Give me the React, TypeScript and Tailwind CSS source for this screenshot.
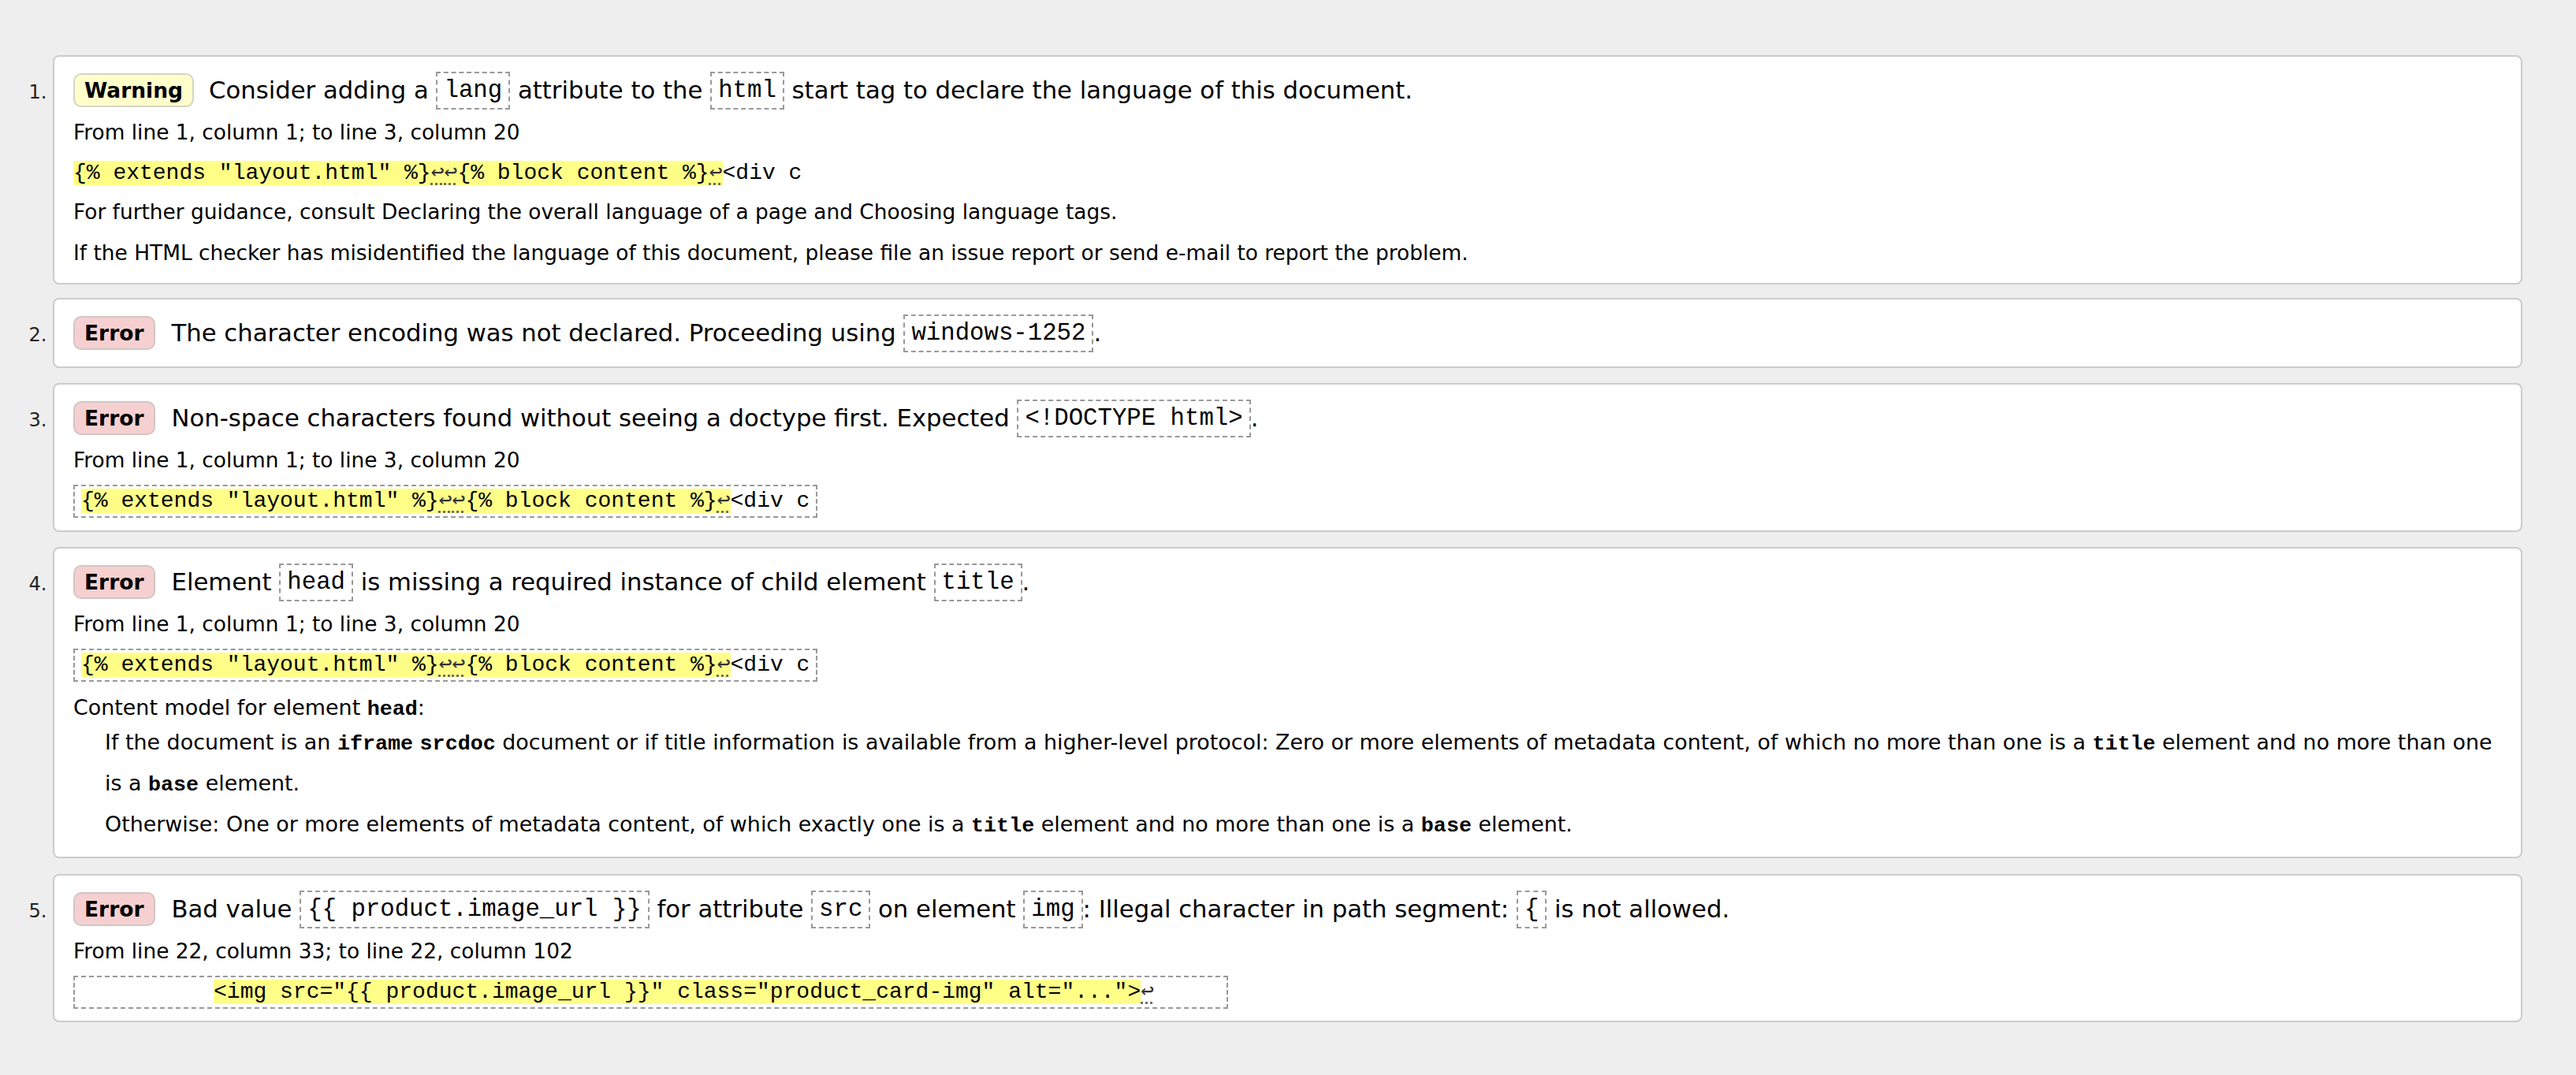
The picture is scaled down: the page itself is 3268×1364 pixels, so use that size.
import React from "react";

type Kids = { children?: React.ReactNode };

const Badge = ({ kind }: { kind: "Warning" | "Error" }) =>
  kind === "Warning" ? (
    <strong className="inline-block align-top mt-[2px] mr-[19px] px-[12px] leading-[39px] text-[26.5px] font-bold text-black bg-[#ffffcc] border-2 border-[#d4d4c4] rounded-[10px]">
      Warning
    </strong>
  ) : (
    <strong className="inline-block align-top mt-[2px] mr-[21px] px-[12px] leading-[39px] text-[26.5px] font-bold text-black bg-[#f6d0d0] border-2 border-[#d2c6c6] rounded-[10px]">
      Error
    </strong>
  );

const HCode = ({ children }: Kids) => (
  <code className="inline-block align-top border-2 border-dashed border-[#999999] px-[8px] leading-[44px] font-['Liberation_Mono',monospace] text-[30.7px] whitespace-pre text-black">
    {children}
  </code>
);

const ICode = ({ children }: Kids) => (
  <code className="font-['Liberation_Mono',monospace] font-bold text-[26.7px] leading-none text-black">{children}</code>
);

const LF = () => (
  <span className="font-['DejaVu_Sans_Mono',monospace] leading-none text-[#333333] underline decoration-dotted decoration-[#666666] underline-offset-[5px]">↩</span>
);

const Mark = ({ children }: Kids) => <b className="font-normal bg-[#ffff88]">{children}</b>;

const Extract = ({ children, boxed }: Kids & { boxed?: boolean }) =>
  boxed ? (
    <p className="mt-[5px] inline-block border-2 border-dashed border-[#999999] py-[3px] px-[8px] leading-[32px] font-['Liberation_Mono',monospace] text-[28px] whitespace-pre text-black align-top">
      {children}
    </p>
  ) : (
    <p className="mt-[10px] leading-[32px] font-['Liberation_Mono',monospace] text-[28px] whitespace-pre text-black">
      {children}
    </p>
  );

const Heading = ({ children }: Kids) => (
  <p className="leading-[48px] text-[30.7px] text-black">{children}</p>
);

const Loc = ({ children }: Kids) => (
  <p className="mt-[3px] leading-[52px] text-[26.4px] text-black">{children}</p>
);

const ExtractStd = ({ boxed }: { boxed?: boolean }) => (
  <Extract boxed={boxed}>
    <Mark>
      {'{% extends "layout.html" %}'}
      <LF />
      <LF />
      {"{% block content %}"}
      <LF />
    </Mark>
    {"<div c"}
  </Extract>
);

export default function App() {
  return (
    <div className="min-h-[1364px] bg-[#eeeeee] pt-[70px] pb-[68px] pl-[67px] pr-[68px] font-['DejaVu_Sans',sans-serif] text-black">
      <ol className="list-decimal marker:text-[24px] marker:text-[#222222]">
        {/* 1 */}
        <li className="bg-white border-2 border-[#cccccc] rounded-[8px] px-[24px] pt-[19px] pb-[12px]">
          <Heading>
            <Badge kind="Warning" />
            {"Consider adding a "}
            <HCode>lang</HCode>
            {" attribute to the "}
            <HCode>html</HCode>
            {" start tag to declare the language of this document."}
          </Heading>
          <Loc>From line 1, column 1; to line 3, column 20</Loc>
          <ExtractStd />
          <p className="mt-[7px] leading-[52px] text-[26.4px]">
            For further guidance, consult Declaring the overall language of a page and Choosing language tags.
          </p>
          <p className="leading-[52px] text-[26.4px]">
            If the HTML checker has misidentified the language of this document, please file an issue report or send e-mail to report the problem.
          </p>
        </li>

        {/* 2 */}
        <li className="mt-[17px] bg-white border-2 border-[#cccccc] rounded-[8px] px-[24px] pt-[19px] pb-[18px]">
          <Heading>
            <Badge kind="Error" />
            {"The character encoding was not declared. Proceeding using "}
            <HCode>windows-1252</HCode>
            {"."}
          </Heading>
        </li>

        {/* 3 */}
        <li className="mt-[19px] bg-white border-2 border-[#cccccc] rounded-[8px] px-[24px] pt-[19px] pb-[16px]">
          <Heading>
            <Badge kind="Error" />
            {"Non-space characters found without seeing a doctype first. Expected "}
            <HCode>{"<!DOCTYPE html>"}</HCode>
            {"."}
          </Heading>
          <Loc>From line 1, column 1; to line 3, column 20</Loc>
          <ExtractStd boxed />
        </li>

        {/* 4 */}
        <li className="mt-[19px] bg-white border-2 border-[#cccccc] rounded-[8px] px-[24px] pt-[19px] pb-[15px]">
          <Heading>
            <Badge kind="Error" />
            {"Element "}
            <HCode>head</HCode>
            {" is missing a required instance of child element "}
            <HCode>title</HCode>
            {"."}
          </Heading>
          <Loc>From line 1, column 1; to line 3, column 20</Loc>
          <ExtractStd boxed />
          <dl className="text-[26.9px]">
            <dt className="mt-[15px] leading-[36px]">
              Content model for element <ICode>head</ICode>:
            </dt>
            <dd className="ml-[40px]">
              <p className="leading-[52px]">
                <span>{"If the document is an "}</span>
                <ICode>iframe</ICode> <ICode>srcdoc</ICode>
                <span>
                  {
                    " document or if title information is available from a higher-level protocol: Zero or more elements of metadata content, of which no more than one is a "
                  }
                </span>
                <ICode>title</ICode>
                <span>{" element and no more than one"}</span>
                <br />
                <span>{"is a "}</span>
                <ICode>base</ICode>
                <span>{" element."}</span>
              </p>
              <p className="leading-[52px]">
                Otherwise: One or more elements of metadata content, of which exactly one is a <ICode>title</ICode>{" "}
                element and no more than one is a <ICode>base</ICode> element.
              </p>
            </dd>
          </dl>
        </li>

        {/* 5 */}
        <li className="mt-[20px] bg-white border-2 border-[#cccccc] rounded-[8px] px-[24px] pt-[19px] pb-[15px]">
          <Heading>
            <Badge kind="Error" />
            {"Bad value "}
            <HCode>{"{{ product.image_url }}"}</HCode>
            {" for attribute "}
            <HCode>src</HCode>
            {" on element "}
            <HCode>img</HCode>
            {": Illegal character in path segment: "}
            <HCode>{"{"}</HCode>
            {" is not allowed."}
          </Heading>
          <Loc>From line 22, column 33; to line 22, column 102</Loc>
          <Extract boxed>
            {"          "}
            <Mark>{'<img src="{{ product.image_url }}" class="product_card-img" alt="...">'}</Mark>
            <LF />
            {"     "}
          </Extract>
        </li>
      </ol>
    </div>
  );
}
